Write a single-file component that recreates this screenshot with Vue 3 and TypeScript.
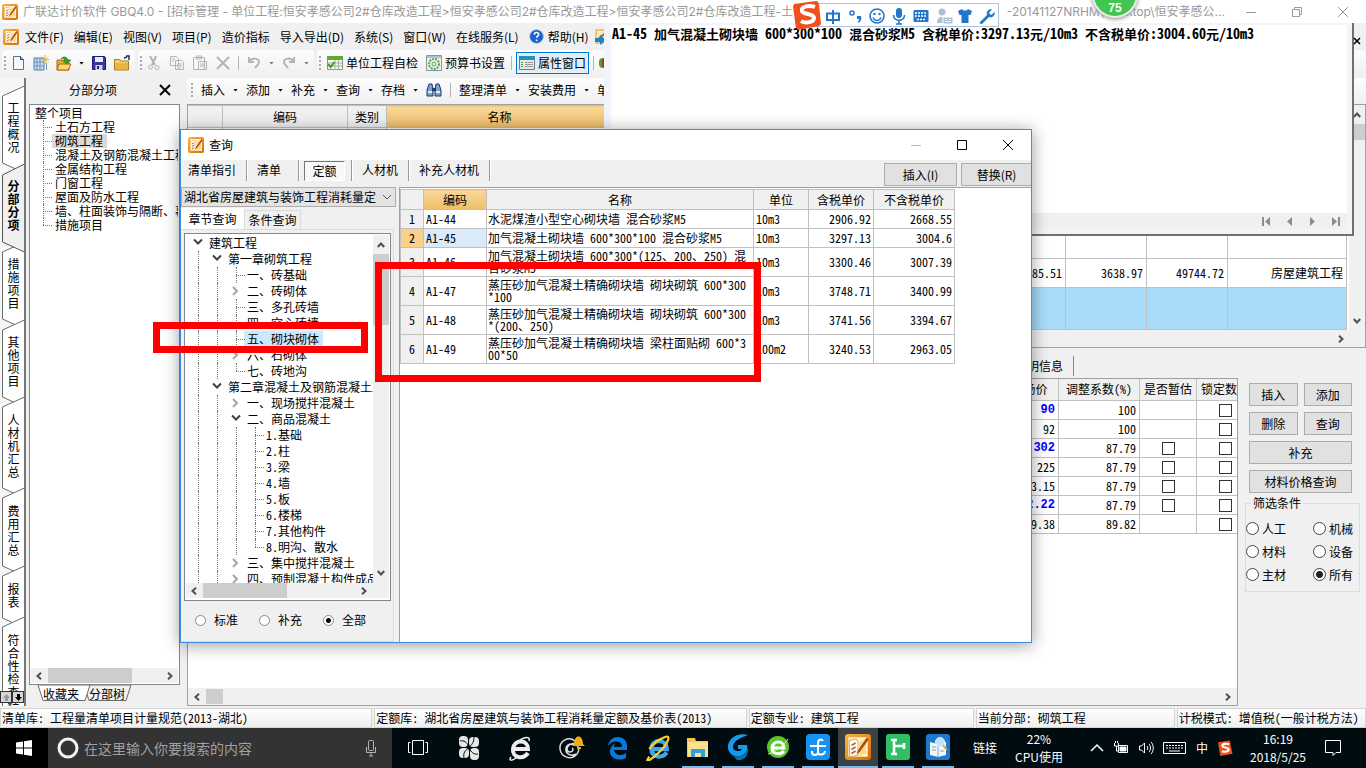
<script setup lang="ts">
import { ref } from 'vue'

interface TreeNode { label: string; depth: number; state: 'open' | 'closed' | 'leaf' | 'last'; picked?: boolean }
interface QuotaRow { code: string; name: string; unit: string; taxed: string; untaxed: string }
interface PriceRow { price: string; strong?: boolean; factor: string; estimate: boolean }

const menus = ['文件(F)', '编辑(E)', '视图(V)', '项目(P)', '造价指标', '导入导出(D)', '系统(S)', '窗口(W)', '在线服务(L)']
const sideTabs = [
  { label: '工程概况', size: 'm' },
  { label: '分部分项', size: 'm', on: true },
  { label: '措施项目', size: 'm' },
  { label: '其他项目', size: 'm' },
  { label: '人材机汇总', size: 'l' },
  { label: '费用汇总', size: 'm' },
  { label: '报表', size: 's' },
  { label: '符合性检查结果', size: 'rest' },
]
const sections = ['土石方工程', '砌筑工程', '混凝土及钢筋混凝土工程', '金属结构工程', '门窗工程', '屋面及防水工程', '墙、柱面装饰与隔断、幕墙工程', '措施项目']
const actions = ['插入', '添加', '补充', '查询', '存档']
const noteParts = 'A1-45 加气混凝土砌块墙 600*300*100 混合砂浆M5 含税单价:3297.13元/10m3 不含税单价:3004.60元/10m3'
  .split(/([\x20-\x7e]+)/)
  .filter(Boolean)
  .map(text => ({ text, latin: /^[\x20-\x7e]/.test(text) }))

const tree: TreeNode[] = [
  { label: '建筑工程', depth: 0, state: 'open' },
  { label: '第一章砌筑工程', depth: 1, state: 'open' },
  { label: '一、砖基础', depth: 2, state: 'leaf' },
  { label: '二、砖砌体', depth: 2, state: 'closed' },
  { label: '三、多孔砖墙', depth: 2, state: 'leaf' },
  { label: '四、空心砖墙', depth: 2, state: 'leaf' },
  { label: '五、砌块砌体', depth: 2, state: 'leaf', picked: true },
  { label: '六、石砌体', depth: 2, state: 'closed' },
  { label: '七、砖地沟', depth: 2, state: 'last' },
  { label: '第二章混凝土及钢筋混凝土工程', depth: 1, state: 'open' },
  { label: '一、现场搅拌混凝土', depth: 2, state: 'closed' },
  { label: '二、商品混凝土', depth: 2, state: 'open' },
  { label: '1.基础', depth: 3, state: 'leaf' },
  { label: '2.柱', depth: 3, state: 'leaf' },
  { label: '3.梁', depth: 3, state: 'leaf' },
  { label: '4.墙', depth: 3, state: 'leaf' },
  { label: '5.板', depth: 3, state: 'leaf' },
  { label: '6.楼梯', depth: 3, state: 'leaf' },
  { label: '7.其他构件', depth: 3, state: 'leaf' },
  { label: '8.明沟、散水', depth: 3, state: 'last' },
  { label: '三、集中搅拌混凝土', depth: 2, state: 'closed' },
  { label: '四、预制混凝土构件成品', depth: 2, state: 'closed' },
]
const quotas: QuotaRow[] = [
  { code: 'A1-44', name: '水泥煤渣小型空心砌块墙 混合砂浆M5', unit: '10m3', taxed: '2906.92', untaxed: '2668.55' },
  { code: 'A1-45', name: '加气混凝土砌块墙 600*300*100 混合砂浆M5', unit: '10m3', taxed: '3297.13', untaxed: '3004.6' },
  { code: 'A1-46', name: '加气混凝土砌块墙 600*300*(125、200、250) 混\n合砂浆M5', unit: '10m3', taxed: '3300.46', untaxed: '3007.39' },
  { code: 'A1-47', name: '蒸压砂加气混凝土精确砌块墙 砌块砌筑 600*300\n*100', unit: '10m3', taxed: '3748.71', untaxed: '3400.99' },
  { code: 'A1-48', name: '蒸压砂加气混凝土精确砌块墙 砌块砌筑 600*300\n*(200、250)', unit: '10m3', taxed: '3741.56', untaxed: '3394.67' },
  { code: 'A1-49', name: '蒸压砂加气混凝土精确砌块墙 梁柱面贴砌 600*3\n00*50', unit: '100m2', taxed: '3240.53', untaxed: '2963.05' },
]
const prices: PriceRow[] = [
  { price: '90', strong: true, factor: '100', estimate: false },
  { price: '92', factor: '100', estimate: false },
  { price: '302', strong: true, factor: '87.79', estimate: true },
  { price: '225', factor: '87.79', estimate: true },
  { price: '3.15', factor: '87.79', estimate: true },
  { price: '2.22', strong: true, factor: '87.79', estimate: true },
  { price: '9.38', factor: '89.82', estimate: false },
]
const filters = ['人工', '机械', '材料', '设备', '主材', '所有']
const filter = ref('所有')
const scopes = ['标准', '补充', '全部']
const scope = ref('全部')
const status = [
  '清单库: 工程量清单项目计量规范(2013-湖北)',
  '定额库: 湖北省房屋建筑与装饰工程消耗量定额及基价表(2013)',
  '定额专业: 建筑工程',
  '当前分部: 砌筑工程',
  '计税模式: 增值税(一般计税方法)',
]
</script>

<template>
  <div class="desktop">
    <svg class="defs" width="0" height="0" aria-hidden="true">
      <defs>
        <linearGradient id="gold" x1="0" y1="0" x2="1" y2="1"><stop offset="0" stop-color="#f7b13c" /><stop offset="1" stop-color="#d96f08" /></linearGradient>
        <symbol id="logo" viewBox="0 0 16 16">
          <rect x="1" y="1" width="14" height="14" rx="1" fill="#fff3cf" stroke="url(#gold)" stroke-width="2" />
          <path d="M2.500 4 7 3l1 2v8l-5 1z" fill="#fff" stroke="#e0a040" stroke-width=".6" />
          <path d="M8 5l5-2v9l-5 1.500z" fill="#fbd98c" />
          <path d="M4 7l2.500-1.500M4 9.500 6.500 8M4 12l2.500-1.500" stroke="#a8642c" />
          <path d="M13.500 2 8 10l-1 2.500 2-1.500L14.500 3.500z" fill="#b04a10" />
        </symbol>
        <symbol id="left" viewBox="0 0 8 8"><path d="M6 .8 2.500 4 6 7.200" fill="none" stroke="#505050" stroke-width="2" /></symbol>
        <symbol id="right" viewBox="0 0 8 8"><path d="M2 .8 5.500 4 2 7.200" fill="none" stroke="#505050" stroke-width="2" /></symbol>
        <symbol id="up" viewBox="0 0 8 8"><path d="M.8 6 4 2.500 7.200 6" fill="none" stroke="#505050" stroke-width="2" /></symbol>
        <symbol id="down" viewBox="0 0 8 8"><path d="M.8 2 4 5.500 7.200 2" fill="none" stroke="#505050" stroke-width="2" /></symbol>
      </defs>
    </svg>

    <main class="app">
      <header class="titlebar">
        <svg class="i16"><use href="#logo" /></svg>
        <h1>广联达计价软件 GBQ4.0 - [招标管理 - 单位工程:恒安孝感公司2#仓库改造工程&gt;恒安孝感公司2#仓库改造工程&gt;恒安孝感公司2#仓库改造工程-土</h1>
        <span class="path">-20141127NRHM\Desktop\恒安孝感公...</span>
        <div class="winbtns">
          <button aria-label="最小化"><svg width="12" height="12"><path d="M1 6.500h10" stroke="#999" /></svg></button>
          <button aria-label="还原"><svg width="12" height="12" fill="none" stroke="#999"><path d="M1.500 3.500h7v7h-7zM3.500 3.500v-2h7v7h-2" /></svg></button>
          <button aria-label="关闭"><svg width="12" height="12" stroke="#999"><path d="M1 1l10 10M11 1 1 11" /></svg></button>
        </div>
      </header>

      <nav class="menubar">
        <svg class="i16"><use href="#logo" /></svg>
        <button v-for="m in menus" :key="m">{{ m }}</button>
        <button class="help">
          <svg width="15" height="15" viewBox="0 0 15 15"><circle cx="7.500" cy="7.500" r="6.800" fill="#1c5fd0" stroke="#8fb4e8" /><path d="M5.300 5.600c.2-3 4.600-2.700 4.400 0-.1 1.500-2.100 1.600-2.100 3.200M7.600 10.500v1.600" fill="none" stroke="#fff" stroke-width="1.600" /></svg>
          帮助(H)
        </button>
        <svg class="leave" width="16" height="16" viewBox="0 0 16 16"><rect x="1" y="1" width="14" height="13" fill="#fde8bf" stroke="#e59a2c" /><path d="M4 9 12 3" stroke="#b05a1c" stroke-width="2" /><path d="M0 9h5V6l6 5-6 5v-3H0z" fill="#1f83c9" /></svg>
      </nav>

      <div class="toolbar">
        <div class="group">
          <i class="grip"></i>
          <svg class="i16" viewBox="0 0 16 16"><path d="M3.500 1.500h7l3 3v10h-10z" fill="#f4f9ff" stroke="#5f7388" /><path d="M10.500 1.500v3h3" fill="#bcd" stroke="#26384a" /></svg>
          <svg class="i16" viewBox="0 0 16 16"><path d="M1 3h10v12H1z" fill="#c7dbf0" stroke="#587ba4" /><path d="M4 3v12M7 3v12M1 7h10M1 11h10M13.500 8v7" stroke="#6f94be" /><path d="M12 0v9M8 4.500h8M9 1.500l6 6M15 1.500l-6 6" stroke="#e8b91c" /></svg>
          <svg class="i16" viewBox="0 0 16 16"><path d="M1 5h5l1 2h6v8H1z" fill="#e9ae31" stroke="#a56f0c" /><path d="M3 9h12l-3 6H1z" fill="#ffd76c" stroke="#a56f0c" /><path d="M5 4c2-3 6-2.500 7 1h3l-4.500 4L7 5h2C8.500 3.500 7 3 5 4z" fill="#2ca336" stroke="#14761d" stroke-width=".6" /></svg>
          <i class="caret"></i>
          <svg class="i16" viewBox="0 0 16 16"><path d="M1.500 1.500h12l1 1v12h-13z" fill="#3437a4" stroke="#1a1c72" /><path d="M4 2h8v5H4z" fill="#e9edff" /><path d="M4.500 10h7v5h-7z" fill="#cfd4e6" /><path d="M6 11h2v3H6z" fill="#26286f" /></svg>
          <svg class="i16" viewBox="0 0 16 16"><path d="M.5 4.500h5l1 1.500h8v9H.5z" fill="#f6cf6a" stroke="#a97c20" /><path d="M1 8h13v6H1z" fill="#e9b540" /><path d="M10 3l3-1M12 1h3v4" fill="none" stroke="#1c2f55" stroke-width="1.500" /></svg>
        </div>
        <div class="group">
          <i class="grip"></i>
          <svg class="i16 dim" viewBox="0 0 16 16"><path d="M4 1l5 9M10 1 6 10" stroke-width="2" /><circle cx="4.500" cy="12" r="2" /><circle cx="11" cy="12.500" r="2" /></svg>
          <svg class="i16 dim" viewBox="0 0 16 16"><path d="M1.500 1.500h6l2 2v7h-8zM6.500 5.500h6l2 2v7h-8zM8 9h5M8 11h5M8 13h4M3 4h3M3 6h2" /></svg>
          <svg class="i16 dim" viewBox="0 0 16 16"><path d="M1.500 2.500h11v12h-11zM4.500 1h5v3h-5zM6.500 6.500h8v8h-8zM8 9h5M8 11h5" /></svg>
          <svg class="i16 dim" viewBox="0 0 16 16"><path d="M2 2l12 12M14 2 2 14" stroke-width="2" /></svg>
          <i class="sep"></i>
          <svg class="i16 dim" viewBox="0 0 16 16"><path d="M3 2v5h5M3 7c3-5 10-4 10 0 0 3-3 4-4 6" stroke-width="2" /></svg>
          <i class="caret grey"></i>
          <svg class="i16 dim" viewBox="0 0 16 16"><path d="M13 2v5H8M13 7C10 2 3 3 3 7c0 3 3 4 4 6" stroke-width="2" /></svg>
          <i class="caret grey"></i>
        </div>
        <div class="group named">
          <i class="grip"></i>
          <button>
            <svg class="i16" viewBox="0 0 16 16"><path d="M.5 1.500h15v13H.5z" fill="#f4f8f0" stroke="#879487" /><path d="M0 1h16v4H0z" fill="#62a930" /><path d="M1 8h14M1 11h14M8 5v10M11.500 5v10" stroke="#9fb39f" /><path d="M1.500 9l2 3 4-5" fill="none" stroke="#3d9a1f" stroke-width="2" /></svg>
            单位工程自检
          </button>
          <button>
            <svg class="i16" viewBox="0 0 16 16"><path d="M.5.5h15v15H.5z" fill="#eaf3ea" stroke="#8298ab" /><path d="M1 1h14v2H1z" fill="#a9c4e0" /><circle cx="8" cy="9" r="5" fill="none" stroke="#5fa44e" stroke-width="2" stroke-dasharray="2 1" /><circle cx="8" cy="9" r="2" fill="none" stroke="#5fa44e" /></svg>
            预算书设置
          </button>
          <i class="sep"></i>
          <button class="active">
            <svg class="i16" viewBox="0 0 16 16"><path d="M.5 1.500h15v13H.5z" fill="#e8e8e4" stroke="#6d7d87" /><path d="M0 1h16v4H0z" fill="#2990bd" /><path d="M6 7.500h8M6 9.500h8M6 11.500h8" stroke="#999" /><path d="M2 7.500h2M2 9.500h2M2 11.500h2" stroke="#3e9a5a" /></svg>
            属性窗口
          </button>
          <i class="sep"></i>
          <svg class="i16" viewBox="0 0 16 16"><rect x="1" y="3" width="8" height="10" rx="4" fill="#30b030" /><rect x="4" y="3" width="9" height="10" rx="3" fill="#d22020" /></svg>
        </div>
      </div>

      <div class="body">
        <nav class="sidetabs">
          <svg width="25" height="628" fill="#fff" stroke="#6b6b6b">
            <path d="M24.500 8 2.500 18v67l22 10z" />
            <path d="M24.500 164 2.500 174v67l22 10z" />
            <path d="M24.500 242 2.500 252v67l22 10z" />
            <path d="M24.500 319 2.500 329v81l22 10z" />
            <path d="M24.500 410 2.500 420v68l22 10z" />
            <path d="M24.500 488 2.500 498v42l22 10z" />
            <path d="M24.500 539 2.500 549v85h22z" />
            <path d="M24.500 86 2.500 97v67l22 10z" fill="#f0f0f0" stroke="#555" />
          </svg>
          <button v-for="t in sideTabs" :key="t.label" :class="['stab', t.size, { on: t.on }]"><span>{{ t.label }}</span></button>
          <div class="spin">
            <button aria-label="上"><svg width="9" height="9"><path d="M4.500 1 8 5H6v3H3V5H1z" fill="#999" /></svg></button>
            <button aria-label="下"><svg width="9" height="9"><path d="M4.500 8 8 4H6V1H3v3H1z" fill="#000" /></svg></button>
          </div>
        </nav>

        <aside class="outline">
          <header><h2>分部分项</h2><button aria-label="关闭面板"><svg width="12" height="12" stroke="#000" stroke-width="2"><path d="M1 1l10 10M11 1 1 11" /></svg></button></header>
          <div class="outbox">
            <ul>
              <li class="root">整个项目</li>
              <li v-for="s in sections" :key="s"><span :class="{ on: s === '砌筑工程' }">{{ s }}</span></li>
            </ul>
            <div class="hscroll"><svg><use href="#left" /></svg><i class="thumb"></i><svg><use href="#right" /></svg></div>
          </div>
          <footer>
            <svg width="104" height="18" fill="#fff" stroke="#6b6b6b"><path d="M47 0h47l-5 15.500H52z" fill="#f0f0f0" /><path d="M1 0h52l-5 15.500H6z" /></svg>
            <button>收藏夹</button><button>分部树</button>
          </footer>
        </aside>

        <section class="work">
          <div class="toolbar2">
            <i class="grip"></i>
            <template v-for="a in actions" :key="a"><button>{{ a }}</button><i class="caret"></i></template>
            <svg class="i16" viewBox="0 0 16 16"><path d="M3 2h3l1 5v7H1V8zM13 2h-3L9 7v7h6V8z" fill="#7da0cf" stroke="#1f3c6e" /><path d="M6 6h4v3H6z" fill="#1f3c6e" /><path d="M2 10h4M10 10h4" stroke="#e4edf8" stroke-width="2" /></svg>
            <i class="sep"></i>
            <button>整理清单</button><i class="caret"></i><button>安装费用</button><i class="caret"></i><button>单价构成</button>
          </div>

          <div class="upper">
            <div class="uppergrid">
              <table>
                <colgroup><col class="w35" /><col class="w125" /><col class="w39" /><col class="w226" /><col /><col class="w81" /><col class="w81" /><col class="w119" /></colgroup>
                <thead><tr><th></th><th>编码</th><th>类别</th><th class="hot">名称</th><th></th><th></th><th></th><th></th></tr></thead>
                <tbody>
                  <tr class="filler"><td v-for="n in 8" :key="n"></td></tr>
                  <tr class="item"><td></td><td></td><td></td><td></td><td>685.51</td><td>3638.97</td><td>49744.72</td><td>房屋建筑工程</td></tr>
                  <tr class="chosen"><td v-for="n in 8" :key="n"></td></tr>
                </tbody>
              </table>
              <div class="hscroll plain"><svg><use href="#right" /></svg></div>
            </div>
            <div class="vscroll"><svg><use href="#up" /></svg><i class="thumb"></i><svg class="end"><use href="#down" /></svg></div>
          </div>

          <div class="infotabs"><button>说明信息</button></div>

          <div class="lower">
            <div class="lowerbox">
              <div class="lowergrid">
                <table>
                  <colgroup><col /><col class="w58" /><col class="w81" /><col class="w57" /><col class="w57" /></colgroup>
                  <thead><tr><th></th><th>市场价</th><th>调整系数(%)</th><th>是否暂估</th><th>锁定数量</th></tr></thead>
                  <tbody>
                    <tr v-for="(p, n) in prices" :key="n">
                      <td></td>
                      <td :class="{ strong: p.strong }">{{ p.price }}</td>
                      <td class="factor">{{ p.factor }}</td>
                      <td class="tick"><input v-if="p.estimate" type="checkbox" :aria-label="'是否暂估 ' + (n + 1)" /></td>
                      <td class="tick"><input type="checkbox" :aria-label="'锁定数量 ' + (n + 1)" /></td>
                    </tr>
                  </tbody>
                </table>
              </div>
              <div class="hscroll wide"><svg><use href="#left" /></svg><i class="thumb"></i><svg><use href="#right" /></svg></div>
            </div>
            <aside class="controls">
              <div class="pair"><button>插入</button><button>添加</button></div>
              <div class="pair"><button>删除</button><button>查询</button></div>
              <button>补充</button>
              <button>材料价格查询</button>
              <fieldset>
                <legend>筛选条件</legend>
                <label v-for="f in filters" :key="f"><input v-model="filter" type="radio" name="filter" :value="f" />{{ f }}</label>
              </fieldset>
            </aside>
          </div>
        </section>
      </div>

      <footer class="statusbar"><span v-for="s in status" :key="s">{{ s }}</span></footer>
    </main>

    <section class="props">
      <div class="note">
        <p><span v-for="(p, n) in noteParts" :key="n" :class="{ latin: p.latin }">{{ p.text }}</span></p>
        <nav>
          <button aria-label="第一条"><svg width="9" height="9" fill="#8c8c8c"><path d="M0 0h2v9H0zM8 0v9L3 4.500z" /></svg></button>
          <button aria-label="上一条"><svg width="9" height="9" fill="#8c8c8c"><path d="M7 0v9L2 4.500z" /></svg></button>
          <button aria-label="下一条"><svg width="9" height="9" fill="#8c8c8c"><path d="M2 0v9l5-4.500z" /></svg></button>
          <button aria-label="最后一条"><svg width="9" height="9" fill="#8c8c8c"><path d="M7 0h2v9H7zM1 0v9l5-4.500z" /></svg></button>
        </nav>
      </div>
    </section>
    <svg class="subclose" width="8" height="8" stroke="#000" stroke-width="1.500"><path d="M1 1l6 6M7 1 1 7" /></svg>

    <section class="dialog" role="dialog" aria-label="查询">
      <header>
        <svg class="i16"><use href="#logo" /></svg>
        <h2>查询</h2>
        <div class="winbtns">
          <button aria-label="最小化"><svg width="12" height="12"><path d="M1 6.500h10" stroke="#bbb" /></svg></button>
          <button aria-label="最大化"><svg width="12" height="12" fill="none" stroke="#000"><path d="M1.500 1.500h9v9h-9z" /></svg></button>
          <button aria-label="关闭"><svg width="12" height="12" stroke="#000"><path d="M1 1l10 10M11 1 1 11" /></svg></button>
        </div>
      </header>
      <div class="dtabs">
        <button>清单指引</button><i></i><button class="roomy">清单</button><i></i><button class="pressed">定额</button><i></i><button>人材机</button><i></i><button>补充人材机</button><i></i>
        <div class="cmds"><button>插入(I)</button><button>替换(R)</button></div>
      </div>
      <div class="dbody">
        <div class="finder">
          <div class="combo">
            <select aria-label="定额库"><option>湖北省房屋建筑与装饰工程消耗量定</option></select>
            <svg width="10" height="8"><path d="M1 2l4 4 4-4" fill="none" stroke="#555" /></svg>
          </div>
          <div class="ftabs"><button class="on">章节查询</button><button>条件查询</button></div>
          <div class="fpage">
            <div class="treebox">
              <div class="treerow">
                <ul class="tree">
                  <li v-for="(n, k) in tree" :key="k">
                    <i v-for="g in n.depth" :key="g" class="slot line"></i>
                    <i :class="['slot', n.state]">
                      <svg v-if="n.state === 'open'" width="10" height="8"><path d="M1 1.500l4 4 4-4" fill="none" stroke="#404040" stroke-width="2" /></svg>
                      <svg v-if="n.state === 'closed'" width="8" height="10"><path d="M2 1l4 4-4 4" fill="none" stroke="#a6a6a6" stroke-width="2" /></svg>
                    </i>
                    <span :class="{ on: n.picked }">{{ n.label }}</span>
                  </li>
                </ul>
                <div class="vscroll"><svg><use href="#up" /></svg><i class="thumb tall"></i><svg class="end"><use href="#down" /></svg></div>
              </div>
              <div class="hscroll tight"><svg><use href="#left" /></svg><i class="thumb"></i><svg><use href="#right" /></svg></div>
            </div>
            <div class="scopes"><label v-for="s in scopes" :key="s"><input v-model="scope" type="radio" name="scope" :value="s" />{{ s }}</label></div>
          </div>
        </div>
        <div class="result">
          <table>
            <colgroup><col class="w23" /><col class="w63" /><col class="w267" /><col class="w55" /><col class="w65" /><col class="w81" /></colgroup>
            <thead><tr><th></th><th class="hot">编码</th><th>名称</th><th>单位</th><th>含税单价</th><th>不含税单价</th></tr></thead>
            <tbody>
              <tr v-for="(q, n) in quotas" :key="q.code" :class="{ on: n === 1, two: n > 1 }">
                <th>{{ n + 1 }}</th><td class="code">{{ q.code }}</td><td class="name">{{ q.name }}</td><td>{{ q.unit }}</td><td class="num">{{ q.taxed }}</td><td class="num">{{ q.untaxed }}</td>
              </tr>
            </tbody>
          </table>
        </div>
      </div>
    </section>

    <div class="mark small"></div>
    <div class="mark large"></div>

    <div class="ime">
      <svg width="182" height="24" viewBox="0 1 182 24" fill="#2376c9">
        <path d="M17 7v14M11 10.500h12v6.500H11z" fill="none" stroke="#2376c9" stroke-width="2" />
        <circle cx="36" cy="10" r="2" fill="none" stroke="#2376c9" stroke-width="1.500" /><path d="M41 13h4c1 4-1 6-3 7v-2c1 0 1-1 1-2h-2z" />
        <circle cx="61" cy="13" r="7" fill="none" stroke="#2376c9" stroke-width="1.600" /><circle cx="58.500" cy="11" r="1.200" /><circle cx="63.500" cy="11" r="1.200" /><path d="M57 14.500c1.500 4 6.500 4 8 0" fill="none" stroke="#2376c9" stroke-width="1.500" />
        <rect x="80" y="5" width="6" height="10" rx="3" /><path d="M77.500 12c0 7 11 7 11 0M83 17v4M80 21h6" fill="none" stroke="#2376c9" stroke-width="1.600" />
        <rect x="97.500" y="7" width="15" height="12" rx="1" /><path d="M99 10h12M99 13h12M101 16.500h8" stroke="#fff" stroke-width="1.500" stroke-dasharray="2 1" />
        <g fill="#aebfd6"><circle cx="126" cy="9" r="3.500" /><path d="M121 20c0-8 9-8 10 0z" /><path d="M127 14h10v7h-10z" stroke="#fff" /><path d="M129 16.500h2M133 16.500h2M129 18.500h6" stroke="#fff" /></g>
        <path d="M142 8l4-2c1 2 5 2 6 0l4 2-1.500 4h-2v8h-7v-8h-2z" />
        <path d="M164 19l7-7c-1-3 1-6 5-6l-3 4 2 2 4-3c0 4-3 6-6 5l-7 7c-2 0-3-1-2-2z" />
      </svg>
    </div>
    <svg class="sogou" width="30" height="30" viewBox="0 0 30 30"><path d="M2 4 24 1c2 0 2 1 3 3l2 20-2 2-21 4-2-2L1 7z" fill="#f0501c" /><path d="M23 7c-5-2-14-1-13 4 1 4 12 2 12 7 0 4-8 6-13 3" fill="none" stroke="#fff" stroke-width="4" /></svg>
    <div class="ball">75</div>

    <footer class="taskbar">
      <button class="start" aria-label="开始"><svg width="16" height="16" fill="#fff"><path d="M0 2.500 7 1.500v6H0zM8 1.300 16 0v7.500H8zM0 8.500h7v6l-7-1zM8 8.500h8V16l-8-1.200z" /></svg></button>
      <div class="search">
        <svg width="22" height="22"><circle cx="11" cy="11" r="9" fill="none" stroke="#f2f2f2" stroke-width="3" /></svg>
        <input type="text" aria-label="搜索" placeholder="在这里输入你要搜索的内容" />
        <svg width="12" height="18" fill="none" stroke="#b5b5b5"><rect x="3.500" y="1.500" width="5" height="10" rx="1" /><path d="M1.500 8v5.500h9V8M6 13.500V17M4 17h4" /></svg>
      </div>
      <div class="wideicons">
        <button aria-label="任务视图"><svg width="20" height="18" fill="none" stroke="#fff"><path d="M4.500 1.500h11v14h-11zM2.500 3.500h-2v10h2M17.500 3.500h2v10h-2" /></svg></button>
        <button aria-label="风车">
          <svg width="22" height="26" viewBox="0 0 22 26" fill="#e8e8e8">
            <rect x="1" y="1" width="9" height="11" rx="4" /><rect x="11" y="2" width="10" height="10" rx="4" /><rect x="1" y="13" width="10" height="10" rx="4" /><rect x="12" y="13" width="9" height="12" rx="4" />
            <path d="M2 6c4-1 7 1 9 6M16 2c0 4-1 7-5 10M20 19c-4 1-7-2-9-6M6 23c-1-5 1-8 5-10" fill="none" stroke="#000c0f" />
          </svg>
        </button>
        <button aria-label="浏览器"><svg width="24" height="26" viewBox="0 0 24 26" fill="none" stroke="#eee"><path d="M5 14h15c0-10-14-10-15 0-1 9 10 11 15 4" stroke-width="4" /><path d="M3 22C0 26 4 26 8 23M21 6c2-6-8-4-14 4" stroke-width="1.500" /></svg></button>
        <button aria-label="提醒"><svg width="28" height="28" viewBox="0 0 28 28" fill="none"><path d="M19 8C12 1 2 7 3 15s11 12 17 5c4-5 0-12-6-10-5 2-5 8-1 8 3 0 4-3 2-4M19 20c-5 3-11 0-10-6 1-4 5-5 9-3" stroke="#ddd" stroke-width="1.500" /><path d="M15 12l2-2c0-10 9-10 9 0l2 2zM20 13h4v2h-4z" fill="#f0ae10" /></svg></button>
      </div>
      <div class="apps">
        <button aria-label="Edge"><svg width="22" height="24" viewBox="0 0 22 24"><path d="M1 10C3-3 21-1 20 11v3H7c1 6 8 6 12 3v5C11 26 2 22 3 14c1-4 4-6 6-7-2 2-2 3-2 4h8c0-7-10-7-14-1z" fill="#0a78d6" /></svg></button>
        <button aria-label="Internet Explorer"><svg width="26" height="26" viewBox="0 0 24 24" fill="none"><path d="M6 13h14c0-10-14-10-14 0 0 8 10 9 14 3" stroke="#3ea5ea" stroke-width="4" /><path d="M4 20c-6 8 3 2 9-4 8-8 12-17 5-14C13 4 8 7 4 13" stroke="#f8d230" stroke-width="2" /></svg></button>
        <button class="run" aria-label="文件资源管理器"><svg width="24" height="24" viewBox="0 0 24 24"><path d="M1 3h8l1 3h12v16H1z" fill="#f5c64c" /><path d="M2 7h20v15H2z" fill="#fde08a" /><path d="M5 14h14v8h-4v-4H9v4H5z" fill="#2e9fe0" /></svg></button>
        <button class="run" aria-label="广联达"><svg width="24" height="28" viewBox="0 0 24 28"><path d="M22 2C10-1 1 7 2 15s10 11 16 6c3-2 4-6 3-9h-9v4h4c-1 3-9 3-9-2 0-6 7-9 15-12z" fill="#169bea" /><path d="M4 19c4 7 15 6 18-5 1 10-5 14-11 13" fill="#0570b8" /></svg></button>
        <button class="run" aria-label="绿色浏览器"><svg width="24" height="26" viewBox="0 0 24 26" fill="none"><circle cx="12" cy="13" r="11" fill="#5bc62c" /><path d="M6 14h12c0-8-11-8-12 0 0 7 9 7 12 3" stroke="#fff" stroke-width="3" /><path d="M2 20c5-1 17-9 20-15" stroke="#d6f4bb" /></svg></button>
        <button class="run" aria-label="蓝色应用"><svg width="24" height="26" viewBox="0 0 24 26" fill="none"><rect width="24" height="26" rx="4" fill="#1593f2" /><path d="M17 7c-2-3-5-1-5 2v9c0 4-6 4-6 0v-1M4 12h16M12 18c0 4 7 3 7-1" stroke="#fff" stroke-width="2" /></svg></button>
        <button class="run current" aria-label="计价软件"><svg width="26" height="26"><use href="#logo" /></svg></button>
        <button class="run" aria-label="绿色应用"><svg width="24" height="26" viewBox="0 0 24 26" fill="none"><rect width="24" height="26" rx="3" fill="#2fc065" /><path d="M8 5v16M8 12h11M18 9v6M5 6h6M5 20h6" stroke="#fff" stroke-width="2.500" /></svg></button>
        <button class="run" aria-label="查看器"><svg width="24" height="26" viewBox="0 0 24 26"><rect width="24" height="26" rx="3" fill="#1c78d0" /><path d="M4 8l8 2 8-2v13l-8 2-8-2z" fill="#f2f6fb" /><path d="M12 10v13M6 13h4M6 16h4M14 17h4" stroke="#8b9db5" /><circle cx="14" cy="8" r="4.500" fill="#bfe2fb" stroke="#e9f4fd" /><path d="M17 11l4 5" stroke="#d9a23c" stroke-width="2" /></svg></button>
      </div>
      <span class="links">链接</span>
      <div class="cpu"><span>22%</span><span>CPU使用</span></div>
      <div class="tray">
        <svg width="14" height="16" fill="none" stroke="#fff" stroke-width="1.500"><path d="M1 11l6-6 6 6" /></svg>
        <svg width="16" height="16" fill="none" stroke="#fff"><path d="M5.500 5.500h9v7h-9zM1.500 3v3h4V3M2.500 1v2M4.500 1v2M3.500 6v5h2" /><path d="M7 7h6v4H7z" fill="#fff" /></svg>
        <svg width="16" height="16" fill="none" stroke="#fff"><path d="M1.500 6v4h2l3 3V3l-3 3zM9 6c1 1 1 3 0 4M11 4c2 2 2 6 0 8M13 2c3 3 3 9 0 12" /></svg>
        <svg width="24" height="16" fill="none" stroke="#fff"><path d="M.5 2.500h22v11H.5z" /><path d="M3 5.500h17M3 8h17" stroke-dasharray="2 1" /><path d="M6 11h11" /></svg>
        <span>中</span>
        <svg width="16" height="18" viewBox="0 0 30 30"><path d="M2 4 24 1l5 25-23 4z" fill="#f0501c" /><path d="M23 8c-5-2-14-1-13 3 1 4 12 2 12 7 0 4-8 5-13 3" fill="none" stroke="#fff" stroke-width="4" /></svg>
      </div>
      <div class="clock"><span>16:19</span><span>2018/5/25</span></div>
      <button class="notice" aria-label="通知"><svg width="18" height="18" fill="none" stroke="#fff"><path d="M1.500 1.500h15v12H12l-3 3v-3H1.500z" /></svg></button>
    </footer>
  </div>
</template>

<style>
body { margin: 0; background: #f0f0f0; }
</style>

<style scoped>
.desktop { position: relative; display: flex; flex-direction: column; height: 100vh; overflow: hidden; font: 12px/16px "Noto Sans Mono CJK SC", "Noto Sans CJK SC", sans-serif; color: #000; background: #f0f0f0; }
.desktop * { box-sizing: border-box; }
.defs { position: absolute; }
button, input, select { font: inherit; color: inherit; margin: 0; }
button { padding: 0; border: 0; background: none; white-space: nowrap; }
h1, h2, p, ul { margin: 0; padding: 0; font: inherit; list-style: none; }
svg { display: block; flex: none; }
.i16 { width: 16px; height: 16px; }
i { display: block; flex: none; }
table { border-collapse: collapse; table-layout: fixed; }
th { font-weight: normal; background: #f0f0f0; }
th, td { padding: 0; border: 1px solid #c0c0c0; overflow: hidden; white-space: nowrap; }
th.hot { background: linear-gradient(#f9d89b, #efbe68); }
.w23 { width: 23px; } .w35 { width: 35px; } .w39 { width: 39px; } .w55 { width: 55px; } .w57 { width: 57px; } .w58 { width: 58px; } .w63 { width: 63px; } .w65 { width: 65px; } .w81 { width: 81px; } .w119 { width: 119px; } .w125 { width: 125px; } .w226 { width: 226px; } .w267 { width: 267px; }

.app { flex: 1; min-height: 0; display: flex; flex-direction: column; }
.titlebar { flex: none; height: 23px; display: flex; align-items: center; padding-left: 2px; background: #fff; color: #999; font-family: Inter, "Noto Sans CJK SC", sans-serif; white-space: nowrap; }
.titlebar h1 { margin-left: 5px; }
.path { margin-left: auto; margin-right: 3px; }
.winbtns { display: flex; }
.winbtns button { width: 46px; height: 22px; display: grid; place-items: center; }
.menubar { flex: none; height: 27px; display: flex; align-items: center; padding-left: 3px; gap: 10px; font-family: "Noto Sans CJK SC", sans-serif; }
.menubar .i16 { margin-right: -4px; }
.menubar .leave { margin-left: -3px; }
.help { display: flex; align-items: center; gap: 4px; }

.toolbar { flex: none; height: 26px; margin-bottom: 2px; display: flex; gap: 3px; padding-left: 2px; }
.group { display: flex; align-items: center; padding: 0 5px 0 2px; border-radius: 3px; background: linear-gradient(#fdfdfd, #f0f0f0); font-family: "Noto Sans CJK SC", sans-serif; }
.group > * + * { margin-left: 7px; }
.group > .grip + * { margin-left: 4px; }
.group.named { flex: 1; }
.named > * + * { margin-left: 4px; }
.named button { display: flex; align-items: center; gap: 3px; height: 22px; padding: 0 2px; }
.named .active { border: 1px solid #0078d7; background: #e0eef9; }
.grip { width: 2px; height: 14px; background: repeating-linear-gradient(#aaa 0 2px, transparent 2px 4px); }
.caret { width: 5px; height: 3px; background: #000; clip-path: polygon(0 0, 100% 0, 50% 100%); }
.caret.grey { background: #777; }
.sep { width: 1px; height: 14px; background: #b5b5b5; }
.dim { fill: none; stroke: #b4b4b4; }

.body { flex: 1; min-height: 0; display: flex; }
.sidetabs { position: relative; flex: none; width: 26px; padding-top: 18px; overflow: hidden; border-right: 2px solid #777; background: #f6f6f6; }
.sidetabs > svg { position: absolute; left: 0; top: 0; }
.stab { position: relative; display: flex; align-items: flex-start; width: 24px; padding: 5px 0 0 3px; line-height: 13px; }
.stab span { display: block; width: 12px; margin: 0 auto; white-space: normal; word-break: break-all; }
.stab.m { height: 78px; } .stab.l { height: 91px; } .stab.s { height: 51px; } .stab.rest { height: 80px; }
.stab.on { font-weight: bold; }
.spin { position: absolute; left: 0; bottom: 3px; display: flex; }
.spin button { width: 12px; height: 12px; border: 1px solid #333; background: #d6d6d6; display: grid; place-items: center; overflow: hidden; }

.outline { flex: none; width: 151px; margin: 0 7px 0 3px; display: flex; flex-direction: column; }
.outline header { flex: none; height: 26px; display: flex; align-items: center; justify-content: flex-end; gap: 42px; padding: 0 9px 2px 0; }
.outbox { flex: 1; min-height: 0; display: flex; flex-direction: column; justify-content: space-between; border: 1px solid #828790; background: #fff; padding: 1px; }
.outbox ul { line-height: 14px; padding: 0 0 0 4px; overflow: hidden; white-space: nowrap; }
.outbox li { position: relative; height: 14px; padding-left: 17px; }
.outbox li.root { padding-left: 0; }
.outbox li:not(.root)::before { content: ""; position: absolute; left: 8px; top: 0; height: 14px; border-left: 1px dotted #777; }
.outbox li:not(.root)::after { content: ""; position: absolute; left: 8px; top: 7px; width: 9px; border-top: 1px dotted #777; }
.outbox li:last-child::before { height: 7px; }
.outbox li span { display: inline-block; height: 14px; padding: 0 4px 0 3px; }
.outbox li .on { background: #d9d9d9; }
.outline footer { position: relative; flex: none; height: 21px; display: flex; gap: 10px; padding-left: 14px; }
.outline footer svg { position: absolute; left: 8px; top: 0; }
.outline footer button { position: relative; height: 17px; }

.hscroll { flex: none; height: 15px; display: flex; align-items: center; justify-content: space-between; padding: 0 4px; background: #f0f0f0; }
.hscroll svg, .vscroll svg { width: 8px; height: 8px; }
.hscroll .thumb { width: 84px; height: 15px; margin: 0 auto 0 5px; background: #cdcdcd; }
.hscroll.plain { justify-content: flex-end; height: 17px; }
.hscroll.wide { height: 17px; padding: 0 5px; }
.hscroll.wide .thumb { width: 17px; }
.hscroll.tight { padding-right: 21px; }
.vscroll { flex: none; width: 16px; display: flex; flex-direction: column; align-items: center; padding: 6px 0; background: #f0f0f0; }
.vscroll .thumb { width: 16px; height: 16px; margin-top: 5px; background: #cdcdcd; }
.vscroll .end { margin-top: auto; }
.upper .vscroll { padding-bottom: 22px; }

.work { flex: 1; min-width: 0; display: flex; flex-direction: column; }
.toolbar2 { flex: none; height: 26px; display: flex; align-items: center; gap: 8px; padding: 0 0 2px 4px; background: linear-gradient(#fdfdfd, #f0f0f0); font-family: "Noto Sans CJK SC", sans-serif; white-space: nowrap; overflow: hidden; }
.upper { flex: none; height: 244px; display: flex; border: 1px solid #a0a0a0; }
.uppergrid { flex: 1; min-width: 0; display: flex; flex-direction: column; background: #fff; overflow: hidden; }
.uppergrid table { width: calc(100% - 1px); margin-left: -1px; }
.uppergrid th { height: 22px; line-height: 14px; }
.uppergrid td { text-align: right; padding-right: 3px; background: #fff; }
.filler td { height: 131px; }
.item td { height: 29px; }
.uppergrid .chosen td { height: 42px; background: #a9dcfa; }
.infotabs { flex: none; height: 30px; display: flex; align-items: center; padding: 6px 0 0 828px; }
.infotabs button { padding-right: 10px; height: 20px; border-right: 1px solid #888; }
.lower { flex: 1; min-height: 0; display: flex; }
.lowerbox { flex: 1; min-width: 0; display: flex; flex-direction: column; border: 1px solid #a0a0a0; background: #fff; }
.lowergrid { flex: 1; overflow: hidden; }
.lowergrid table { width: calc(100% + 17px); }
.lowergrid th { height: 21px; border-top: 0; }
.lowergrid td { height: 19px; text-align: right; padding-right: 3px; line-height: 14px; }
.lowergrid .strong { font: bold 12px/14px "Liberation Mono", monospace; color: #00f; }
.lowergrid .tick { text-align: center; padding: 0; }
.tick input { appearance: none; width: 13px; height: 13px; border: 1px solid #333; background: #fff; vertical-align: middle; }
.controls { flex: none; width: 128px; padding: 5px 14px 0 11px; display: flex; flex-direction: column; gap: 6px; }
.pair { display: flex; gap: 6px; }
.pair button { flex: 1; }
.controls button, .cmds button { height: 23px; border: 1px solid #adadad; background: #e1e1e1; }
.controls fieldset { margin: -4px -8px 0 -4px; padding: 6px 0 0; height: 97px; border: 1px solid #dcdcdc; display: grid; grid-template-columns: 67px 1fr; grid-auto-rows: 23px; }
.controls legend { margin-left: 5px; padding: 0 2px; }
.controls label, .scopes label { display: flex; align-items: center; gap: 3px; }
input[type="radio"] { appearance: none; flex: none; width: 13px; height: 13px; border: 1px solid #444; border-radius: 50%; background: #fff; }
input[type="radio"]:checked { background: radial-gradient(circle, #222 0 3px, #fff 4px); }

.statusbar { flex: none; height: 22px; display: grid; grid-template-columns: 374fr 374fr 226fr 200fr 190fr; gap: 2px; padding-top: 2px; white-space: nowrap; }
.statusbar span { min-width: 0; overflow: hidden; border: 1px solid #d4d4d4; padding-left: 1px; line-height: 17px; background: linear-gradient(#fff, #efefef); }

.props { position: absolute; left: 604px; right: 12px; top: 23px; height: 213px; padding: 2px 5px 5px 7px; border-right: 2px solid #707070; border-bottom: 2px solid #707070; background: #f1f5fb; }
.note { height: 100%; display: flex; flex-direction: column; justify-content: space-between; background: #fff; overflow: hidden; }
.note p { font-size: 13px; font-weight: bold; line-height: 17px; white-space: pre; padding-left: 1px; }
.note .latin { font-size: 14px; }
.note nav { height: 16px; display: flex; justify-content: flex-end; align-items: center; gap: 14px; padding-right: 7px; background: #f0f0f0; }
.subclose { position: absolute; right: 5px; top: 37px; }

.dialog { position: absolute; left: 180px; top: 129px; width: 852px; height: 514px; display: flex; flex-direction: column; border: 1px solid #3c8fe4; background: #f0f0f0; box-shadow: 0 2px 16px rgba(0, 0, 0, .4); overflow: hidden; }
.dialog > header { flex: none; height: 30px; display: flex; align-items: center; padding-left: 7px; background: #fff; font-family: "Noto Sans CJK SC", sans-serif; }
.dialog h2 { margin: 0 auto 0 5px; }
.dtabs { flex: none; height: 27px; display: flex; align-items: flex-start; padding-left: 7px; }
.dtabs > button { height: 20px; margin: 0 10px 0 0; }
.dtabs > .roomy { margin-right: 17px; }
.dtabs > i { width: 2px; height: 21px; margin-right: 9px; border-left: 1px solid #999; border-right: 1px solid #fff; }
.dtabs > .pressed { width: 41px; margin: 1px 6px 0 -5px; border: 1px solid #fff; border-top-color: #777; border-left-color: #777; background: #f8f8f8; }
.cmds { margin: 3px 0 0 auto; display: flex; gap: 4px; }
.cmds button { width: 73px; font-family: "Noto Sans CJK SC", sans-serif; }
.cmds button:last-child { width: 70px; border-right: 0; }
.dbody { flex: 1; min-height: 0; display: flex; }
.finder { flex: none; width: 215px; margin-right: 3px; display: flex; flex-direction: column; }
.combo { position: relative; flex: none; height: 20px; }
.combo select { appearance: none; width: 100%; height: 20px; padding: 0 18px 0 2px; border: 1px solid #adadad; border-radius: 0; background: #e3e3e3; }
.combo svg { position: absolute; right: 4px; top: 6px; }
.ftabs { flex: none; height: 22px; display: flex; align-items: flex-end; }
.ftabs button { height: 19px; width: 57px; border: 1px solid #dcdcdc; border-bottom: 0; }
.ftabs .on { width: 63px; height: 21px; background: #fff; border-color: #fff; }
.fpage { flex: 1; min-height: 0; display: flex; flex-direction: column; margin-right: 2px; padding: 3px 2px 0 3px; border: 1px solid #dcdcdc; border-left: 0; }
.treebox { height: 368px; display: flex; flex-direction: column; border: 1px solid #828790; padding: 1px 1px 2px; background: #fff; }
.treerow { flex: 1; min-height: 0; display: flex; }
.tree { flex: 1; min-width: 0; padding-left: 1px; overflow: hidden; white-space: nowrap; }
.tree li { display: flex; height: 16px; line-height: 16px; }
.slot { position: relative; width: 19px; height: 16px; flex: none; }
.slot svg { position: absolute; left: 6px; top: 3px; }
.slot.line::before, .slot.leaf::before, .slot.last::before { content: ""; position: absolute; left: 11px; top: 0; height: 16px; border-left: 1px dotted #777; }
.slot.last::before { height: 8px; }
.slot.leaf::after, .slot.last::after { content: ""; position: absolute; left: 11px; top: 8px; width: 9px; border-top: 1px dotted #777; }
.tree span { padding: 0 4px 0 3px; height: 15px; line-height: 15px; }
.tree .on { background: #cce8ff; }
.vscroll .tall { height: 71px; }
.scopes { display: flex; gap: 21px; padding: 11px 0 0 11px; }
.scopes label { gap: 8px; height: 16px; }
.scopes input { width: 11px; height: 11px; border-color: #888; }
.scopes input:checked { background: radial-gradient(circle, #000 0 2px, #fff 3px); }
.result { flex: 1; padding-top: 1px; border-left: 1px solid #a0a0a0; border-top: 1px solid #a0a0a0; background: #fff; }
.result table { width: 555px; }
.result th { height: 20px; line-height: 15px; }
.result tbody th, .result td { height: 19px; line-height: 12px; }
.result .two th, .result .two td { height: 29px; }
.result td { padding-left: 2px; }
.result .name { padding-left: 1px; white-space: pre-line; }
.result .num { text-align: right; padding-right: 2px; }
.result .on th { background: #fdd08a; }
.result .on .code { background: #d9eaf8; }

.mark { position: absolute; border: 7px solid #f00; }
.mark.small { left: 153px; top: 322px; width: 215px; height: 31px; }
.mark.large { left: 375px; top: 262px; width: 386px; height: 120px; }
.ime { position: absolute; left: 815px; top: 3px; width: 184px; height: 24px; border: 1px solid #afc3dc; background: #fff; overflow: hidden; }
.sogou { position: absolute; left: 792px; top: 0; }
.ball { position: absolute; left: 1092px; top: -28px; width: 46px; height: 46px; padding-top: 26px; border: 2px solid #e8efe8; border-radius: 50%; background: #43c552; box-shadow: 0 1px 4px #888; color: #fff; text-align: center; font: bold 12px/16px "Liberation Sans", sans-serif; }

.taskbar { flex: none; height: 40px; display: flex; align-items: center; background: #000c0f; color: #fff; font: 12px/18px "Noto Sans CJK SC", sans-serif; }
.taskbar button { display: grid; place-items: center; height: 40px; }
.start { width: 48px; background: #000; }
.search { width: 344px; height: 40px; display: flex; align-items: center; gap: 5px; padding: 0 15px 0 9px; background: #333; }
.search input { flex: 1; min-width: 0; height: 24px; padding: 0; border: 0; background: none; font-size: 14px; color: #a0a0a0; }
.search input::placeholder { color: #a0a0a0; opacity: 1; }
.wideicons, .apps { display: flex; }
.apps { margin-left: 2px; }
.wideicons button { width: 51px; }
.apps button { width: 40px; }
.taskbar .run { border-bottom: 2px solid #76b9ed; }
.taskbar .run:not(.current) { width: 32px; margin: 0 4px; }
.current { background: #3c4144; }
.links { margin-left: 15px; }
.cpu, .clock { display: flex; flex-direction: column; align-items: center; }
.cpu { margin-left: 18px; }
.tray { display: flex; align-items: center; gap: 9px; margin-left: auto; }
.clock { margin-left: 17px; }
.notice { width: 53px; margin-right: 7px; }
</style>
